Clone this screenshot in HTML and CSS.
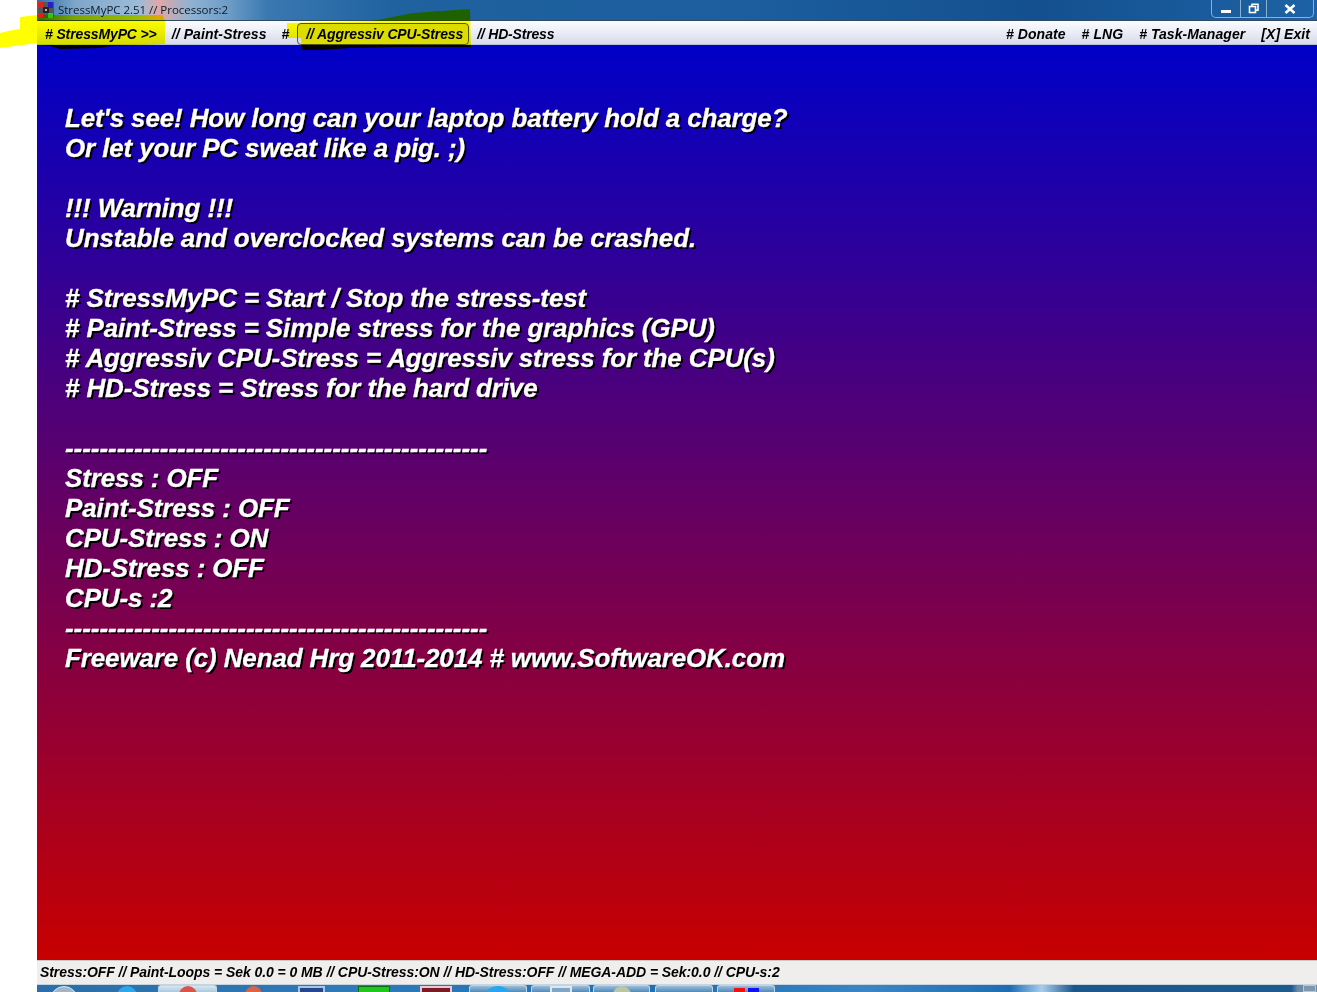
FILE: index.html
```html
<!DOCTYPE html>
<html lang="en">
<head>
<meta charset="utf-8">
<title>StressMyPC</title>
<link rel="stylesheet" href="styles.css">
</head>
<body>
<main class="window">
  <header class="titlebar">
    <svg class="app-icon" width="16" height="16" viewBox="0 0 16 16"><rect width="16" height="16" fill="#555"/><rect width="5" height="6" fill="#d22"/><rect x="10" width="5" height="6" fill="#22c"/><rect y="11" width="5" height="5" fill="#d22"/><rect x="10" y="11" width="5" height="5" fill="#2c2"/><rect x="5" y="5" width="6" height="6" fill="#222"/><rect x="7" y="7" width="2" height="2" fill="#bbb"/></svg>
    <span class="title-text">StressMyPC 2.51 // Processors:2</span>
    <div class="controls">
      <span class="ctl ctl-min"><svg width="12" height="10" viewBox="0 0 12 10"><rect x="1" y="6" width="10" height="3" fill="#fff"/></svg></span>
      <span class="ctl ctl-max"><svg width="12" height="11" viewBox="0 0 12 11" fill="none" stroke="#fff" stroke-width="1.6"><rect x="1.5" y="3.5" width="6" height="6"/><path d="M4 3V1.2h6v6H8"/></svg></span>
      <span class="ctl ctl-close"><svg width="12" height="10" viewBox="0 0 12 10" stroke="#fff" stroke-width="2.6"><path d="M1.5 1l9 8M10.500 1l-9 8"/></svg></span>
    </div>
  </header>
  <nav class="menubar">
    <div class="menu-left">
      <span class="item item-start"># StressMyPC &gt;&gt;</span>
      <span class="item item-paint">// Paint-Stress</span>
      <span class="item item-hash">#</span>
      <span class="item item-cpu">// Aggressiv CPU-Stress</span>
      <span class="item item-hd">// HD-Stress</span>
    </div>
    <div class="menu-right">
      <span class="item item-wide"># Donate</span>
      <span class="item item-wide"># LNG</span>
      <span class="item item-wide"># Task-Manager</span>
      <span class="item item-wide">[X] Exit</span>
    </div>
  </nav>
  <section class="canvas">
    <p class="line">Let's see! How long can your laptop battery hold a charge?</p>
    <p class="line">Or let your PC sweat like a pig. ;)</p>
    <p class="line">&nbsp;</p>
    <p class="line">!!! Warning !!!</p>
    <p class="line">Unstable and overclocked systems can be crashed.</p>
    <p class="line">&nbsp;</p>
    <p class="line"># StressMyPC = Start / Stop the stress-test</p>
    <p class="line"># Paint-Stress = Simple stress for the graphics (GPU)</p>
    <p class="line"># Aggressiv CPU-Stress = Aggressiv stress for the CPU(s)</p>
    <p class="line"># HD-Stress = Stress for the hard drive</p>
    <p class="line">&nbsp;</p>
    <p class="line rule">-------------------------------------------------</p>
    <p class="line">Stress : OFF</p>
    <p class="line">Paint-Stress : OFF</p>
    <p class="line">CPU-Stress : ON</p>
    <p class="line">HD-Stress : OFF</p>
    <p class="line">CPU-s :2</p>
    <p class="line rule">-------------------------------------------------</p>
    <p class="line">Freeware (c) Nenad Hrg 2011-2014 # www.SoftwareOK.com</p>
  </section>
  <footer class="statusbar">Stress:OFF // Paint-Loops = Sek 0.0 = 0 MB // CPU-Stress:ON // HD-Stress:OFF // MEGA-ADD = Sek:0.0 // CPU-s:2</footer>
  <div class="taskbar">
    <span class="tb tb-orb"><i class="orb"></i></span>
    <span class="tb tb-blue"><i class="dot dot-blue"></i></span>
    <span class="tb tb-btn tb-active"><i class="dot dot-red"></i></span>
    <span class="tb tb-red"><i class="dot dot-orange"></i></span>
    <span class="tb tb-win"><i class="sq sq-win"></i></span>
    <span class="tb tb-green"><i class="sq sq-green"></i></span>
    <span class="tb tb-cal"><i class="sq sq-cal"></i></span>
    <span class="tb tb-btn tb-b1"><i class="dot dot-sky"></i></span>
    <span class="tb tb-btn tb-b2"><i class="sq sq-white"></i></span>
    <span class="tb tb-btn tb-b3"><i class="dot dot-globe"></i></span>
    <span class="tb tb-btn tb-b4"></span>
    <span class="tb tb-btn tb-b5"><i class="sq sq-rb"></i><i class="sq sq-bl"></i></span>
    <span class="tb tb-desk"></span>
  </div>
</main>
<svg class="marker" width="480" height="52" viewBox="0 0 480 52">
  <polygon points="0,48 0,33 8,31 20,29 20,17 37,15 163,15 165,22 165,44 110,46 100,48 60,49 50,46 37,45 37,43"/>
  <polygon points="287,23 372,21 413,13 470,9 471,47 400,47 350,48 320,50 302,50 301,38 287,38"/>
</svg>
</body>
</html>
```
FILE: styles.css
```css
html, body { margin: 0; padding: 0; }
body { background: #fff; width: 1317px; height: 992px; overflow: hidden; position: relative; font-family: "Liberation Sans", Arial, sans-serif; }
.marker { position: absolute; left: 0; top: 0; fill: #ffff00; mix-blend-mode: multiply; pointer-events: none; }
.window { margin-left: 37px; width: 1280px; height: 992px; display: flex; flex-direction: column; }
.titlebar { height: 21px; flex: none; display: flex; align-items: flex-start; background: linear-gradient(90deg, #2f6ea8 0, #7ea6ca 3%, #9dbcd8 8%, #dfa9a6 9.500%, #8fb2d2 12%, #6d9cc6 15%, #3a78b2 18%, #1f629f 28%, #1c5e9e 55%, #14508f 78%, #1d62a5 100%); box-sizing: border-box; border-bottom: 1px solid #2f4a66; }
.app-icon { margin: 2px 0 0 1px; flex: none; }
.title-text { margin: 2px 0 0 4px; font: 11.500px/16px "Open Sans", "Liberation Sans", sans-serif; letter-spacing: -0.03px; color: #0c1a28; white-space: nowrap; }
.controls { margin-left: auto; margin-right: 3px; display: flex; height: 18px; border: 1px solid #8fb0cc; border-top: none; border-radius: 0 0 5px 5px; box-sizing: border-box; }
.ctl { display: flex; align-items: center; justify-content: center; height: 100%; border-right: 1px solid #8fb0cc; box-sizing: border-box; }
.ctl:last-child { border-right: none; }
.ctl-min { width: 29px; }
.ctl-max { width: 26px; }
.ctl-close { width: 46px; }
.menubar { height: 24px; flex: none; display: flex; justify-content: space-between; align-items: center; padding-top: 2px; background: linear-gradient(180deg, #fbfcff 0, #eef0f8 40%, #d6dbeb 100%); border-bottom: 1px solid #b9c2d8; box-sizing: border-box; font: italic bold 14px "Liberation Sans", Arial, sans-serif; color: #000; }
.menu-left, .menu-right { display: flex; align-items: center; height: 100%; }
.menu-right { padding-right: 7px; gap: 16px; }
.item { white-space: nowrap; }
.item-wide { letter-spacing: 0.06px; }
.item-start { margin-left: 8px; letter-spacing: -0.13px; }
.item-paint { margin-left: 15px; letter-spacing: 0.1px; }
.item-hash { margin-left: 15px; }
.item-cpu { margin-left: 8px; margin-top: 1px; padding: 2px 5px 2px 8px; background: #dcdcdc; border: 1px solid #555; border-radius: 4px; letter-spacing: -0.13px; }
.item-hd { margin-left: 8px; letter-spacing: -0.18px; }
.canvas { flex: 1; background: linear-gradient(180deg, #0000c8 0, #c80000 100%); padding: 58px 0 0 28px; overflow: hidden; }
.line { margin: 0; height: 30px; font: italic bold 26px/30px "Liberation Sans", Arial, sans-serif; letter-spacing: -0.13px; color: #fff; -webkit-text-stroke: 0.3px #fff; text-shadow: 2px 2px 0 #000; white-space: nowrap; }
.rule { letter-spacing: -0.04px; }
.statusbar { height: 24px; flex: none; box-sizing: border-box; background: #f0eded; border-top: 1px solid #c9c9c9; padding: 2px 0 0 3px; font: italic bold 14px/18px "Liberation Sans", Arial, sans-serif; letter-spacing: -0.07px; color: #000; white-space: nowrap; }
.taskbar { height: 8px; flex: none; display: flex; overflow: hidden; box-sizing: border-box; border-top: 1px solid #c4d4e0; background: linear-gradient(90deg, #2c6fa8 0, #2f7ab8 25%, #1f6fb5 50%, #3a86c4 65%, #1f6cb2 76%, #a8cdec 78.500%, #1d568a 81%, #1f5a8e 98%, #6f8ba3 98.500%); }
.tb { flex: none; display: flex; justify-content: center; gap: 3px; box-sizing: border-box; padding-top: 1px; height: 100%; }
.tb-btn { background: linear-gradient(180deg, #9dbcd6, #4d8bbd); border: 1px solid #c3d5e3; border-bottom: none; border-radius: 3px 3px 0 0; padding-top: 0; }
.tb-active { background: linear-gradient(180deg, #d8e6f0, #a9c9df); }
.tb-orb { margin-left: 13px; width: 28px; }
.tb-blue { margin-left: 39px; width: 20px; }
.tb-active { margin-left: 21px; width: 59px; }
.tb-red { margin-left: 28px; width: 17px; }
.tb-win { margin-left: 36px; width: 27px; }
.tb-green { margin-left: 33px; width: 32px; }
.tb-cal { margin-left: 30px; width: 32px; }
.tb-b1 { margin-left: 17px; width: 58px; }
.tb-b2 { margin-left: 4px; width: 59px; }
.tb-b3 { margin-left: 3px; width: 57px; }
.tb-b4 { margin-left: 5px; width: 58px; }
.tb-b5 { margin-left: 4px; width: 58px; }
.tb-desk { margin-left: auto; margin-right: 1px; width: 13px; background: #7f97ab; border: 1px solid #b8c6d2; padding: 0; }
.orb { display: block; width: 28px; height: 28px; border-radius: 50%; background: #9fb6c9; border: 1px solid #dfe7ee; box-sizing: border-box; }
.dot { display: block; width: 18px; height: 18px; border-radius: 50%; }
.dot-blue { background: #2fa6e8; width: 20px; height: 20px; }
.dot-red { background: #d9544a; }
.dot-orange { background: #d8654a; }
.dot-sky { background: #27a5ee; width: 28px; height: 28px; }
.dot-globe { background: #b9c7a6; }
.sq { display: block; box-sizing: border-box; }
.sq-win { width: 27px; height: 10px; background: #24478f; border: 2px solid #a8c4e2; }
.sq-green { width: 32px; height: 10px; background: #1ec81e; border: 1px solid #0d6a0d; }
.sq-cal { width: 32px; height: 10px; background: #7c1a2a; border: 2px solid #e9c9cc; }
.sq-white { width: 22px; height: 10px; background: #7fa6c6; border: 2px solid #dfe8ef; }
.sq-rb { width: 11px; height: 4px; margin-top: 2px; background: #f01010; }
.sq-bl { width: 11px; height: 4px; margin-top: 2px; background: #1010f0; }
```
